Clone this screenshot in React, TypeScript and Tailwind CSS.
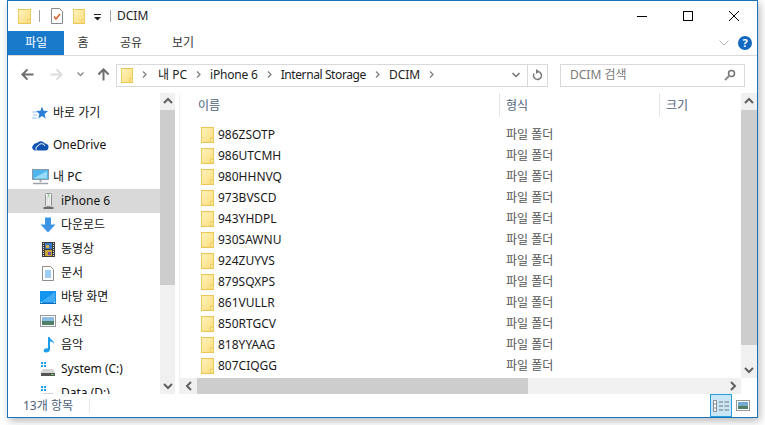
import React from "react";

const F = "font-['Noto_Sans','Noto_Sans_CJK_KR',sans-serif]";

function Folder({ s = 13, h = 15 }: { s?: number; h?: number }) {
  return (
    <svg width={s} height={h} viewBox="0 0 14 15" preserveAspectRatio="none" className="shrink-0">
      <defs>
        <linearGradient id="fg" x1="0" y1="0" x2="1" y2="1">
          <stop offset="0" stopColor="#fff3bf" />
          <stop offset="1" stopColor="#fbdc7a" />
        </linearGradient>
      </defs>
      <rect x="0.5" y="0.5" width="13" height="14" fill="url(#fg)" stroke="#eac752" />
      <path d="M10.5 14.5v-4h3" fill="#fff3c4" stroke="#eac752" />
    </svg>
  );
}

function Chev({ d, c = "#606060" }: { d: "u" | "d" | "l" | "r"; c?: string }) {
  const p = { u: "M1 6l4-4 4 4", d: "M1 3l4 4 4-4", l: "M7 1L3 5l4 4", r: "M3 1l4 4-4 4" }[d];
  return (
    <svg width="10" height="10" viewBox="0 0 10 10">
      <path d={p} fill="none" stroke={c} strokeWidth="2" />
    </svg>
  );
}

function Arrow({ dir, c }: { dir: "l" | "r" | "u"; c: string }) {
  const rot = dir === "l" ? 0 : dir === "r" ? 180 : 90;
  return (
    <svg width="13" height="13" viewBox="0 0 14 14" style={{ transform: `rotate(${rot}deg)` }}>
      <path d="M1.5 7h12M7 1.5L1.5 7 7 12.5" fill="none" stroke={c} strokeWidth="2.200" />
    </svg>
  );
}

const icons: Record<string, React.ReactNode> = {
  star: (
    <svg width="16" height="15" viewBox="0 0 16 15" className="shrink-0">
      <path d="M10 0.500l1.600 4.300 4.400.3-3.400 2.800 1.100 4.500L10 10.100l-3.700 2.300 1.100-4.500L4 5.100l4.400-.3z" fill="#2b7fd6" />
      <path d="M0.500 6h4M1 9h4M0 12h5" stroke="#8fc1ee" strokeWidth="1" />
    </svg>
  ),
  cloud: (
    <svg width="17" height="12" viewBox="0 0 17 12" className="shrink-0">
      <path d="M3 11.500A3 3 0 0 1 1 6.500 4 4 0 0 1 5 4 5 5 0 0 1 13 4.500 3.500 3.500 0 0 1 16.500 8.500 3 3 0 0 1 14 11.500z" fill="#0f52b0" />
      <path d="M5 11.500A2.500 2.500 0 0 1 6 7 3.800 3.800 0 0 1 13 7" fill="none" stroke="#fff" strokeWidth="1" />
    </svg>
  ),
  pc: (
    <svg width="17" height="16" viewBox="0 0 17 16" className="shrink-0">
      <rect x="0.500" y="0.500" width="16" height="10" fill="#4fb5ee" stroke="#8a9aa5" />
      <path d="M2 9L15 2V9.500H2z" fill="#9adcf8" />
      <path d="M8.500 11v2" stroke="#a0a8ae" strokeWidth="2" />
      <path d="M1 14.500h15" stroke="#9ba3a8" strokeWidth="1.500" />
    </svg>
  ),
  phone: (
    <svg width="11" height="16" viewBox="0 0 11 16" className="shrink-0">
      <rect x="2.500" y="0.500" width="6" height="13" rx="1" fill="#fff" stroke="#8e8e8e" />
      <rect x="4" y="4" width="3" height="9" fill="#eee" stroke="#bbb" strokeWidth="0.500" />
      <rect x="4.500" y="1.500" width="2" height="2" fill="#7fc97a" />
      <path d="M0.500 15h10" stroke="#444" strokeWidth="1.500" />
    </svg>
  ),
  down: (
    <svg width="16" height="16" viewBox="0 0 16 16" className="shrink-0">
      <path d="M5 0.500h6v7h4.500L8 15.500.5 7.500H5z" fill="#3d94e2" />
    </svg>
  ),
  film: (
    <svg width="13" height="15" viewBox="0 0 13 15" className="shrink-0">
      <rect x="0" y="0" width="13" height="15" fill="#3c3c3c" />
      <rect x="3" y="1" width="7" height="6" fill="#3a78c9" />
      <rect x="3" y="8" width="7" height="6" fill="#c9a63a" />
      <rect x="4" y="3" width="3" height="3" fill="#d9b23f" />
      <rect x="6" y="10" width="3" height="3" fill="#7a4aa6" />
      <path d="M1.500 1v13M11.500 1v13" stroke="#ddd" strokeWidth="1" strokeDasharray="1 1" />
    </svg>
  ),
  doc: (
    <svg width="12" height="15" viewBox="0 0 12 15" className="shrink-0">
      <path d="M.5.500h8l3 3v11H.500z" fill="#fff" stroke="#8e8e8e" />
      <path d="M3 5h6M3 7h6M3 9h6M3 11h6" stroke="#3f9be6" strokeWidth="1" />
    </svg>
  ),
  desk: (
    <svg width="16" height="13" viewBox="0 0 16 13" className="shrink-0">
      <rect width="16" height="13" fill="#1394ee" />
      <path d="M1 11L15 1v10z" fill="#41abf4" />
      <path d="M0 12.500h16" stroke="#0f6ab8" />
      <path d="M1 11.500h1M14 11.500h1" stroke="#fff" />
    </svg>
  ),
  pic: (
    <svg width="16" height="12" viewBox="0 0 16 12" className="shrink-0">
      <rect x="0.500" y="0.500" width="15" height="11" fill="#fff" stroke="#999" />
      <rect x="2" y="2" width="12" height="4" fill="#8dbde6" />
      <rect x="2" y="6" width="12" height="4" fill="#4f7f66" />
    </svg>
  ),
  music: (
    <svg width="13" height="16" viewBox="0 0 13 16" className="shrink-0">
      <path d="M6 0h1.500c.5 2.500 4.500 3 4.500 7-1-2-3-2.500-4-2.500V12.500c0 2-2.500 3.200-4.500 3-2.500-.5-2.500-3 0-4 1-.4 1.800-.4 2.500 0z" fill="#1b9cee" />
    </svg>
  ),
  drive: (
    <svg width="14" height="14" viewBox="0 0 14 14" className="shrink-0">
      <path d="M0 0h2v2H0zM3 0h2v2H3zM0 3h2v2H0zM3 3h2v2H3z" fill="#18a0ee" />
      <path d="M2 7h10l2 3v3H0v-3z" fill="#d4d4d4" />
      <rect x="0" y="11" width="14" height="3" fill="#555" />
      <rect x="10" y="12" width="3" height="1" fill="#5fd35f" />
    </svg>
  ),
};

const nav = [
  { t: "바로 가기", i: "star", indent: 0, h: "h-[32px]" },
  { t: "OneDrive", i: "cloud", indent: 0, h: "h-[32px]" },
  { t: "내 PC", i: "pc", indent: 0, h: "h-[24px] mt-[4px]" },
  { t: "iPhone 6", i: "phone", indent: 1, h: "h-[24px] bg-[#d9d9d9]" },
  { t: "다운로드", i: "down", indent: 1, h: "h-[24px]" },
  { t: "동영상", i: "film", indent: 1, h: "h-[24px]" },
  { t: "문서", i: "doc", indent: 1, h: "h-[24px]" },
  { t: "바탕 화면", i: "desk", indent: 1, h: "h-[24px]" },
  { t: "사진", i: "pic", indent: 1, h: "h-[24px]" },
  { t: "음악", i: "music", indent: 1, h: "h-[24px]" },
  { t: "System (C:)", i: "drive", indent: 1, h: "h-[24px]" },
  { t: "Data (D:)", i: "drive", indent: 1, h: "h-[24px]" },
];

const rows = [
  "986ZSOTP", "986UTCMH", "980HHNVQ", "973BVSCD", "943YHDPL", "930SAWNU",
  "924ZUYVS", "879SQXPS", "861VULLR", "850RTGCV", "818YYAAG", "807CIQGG",
];

export default function App() {
  return (
    <div className={`${F} w-[765px] h-[425px] bg-white overflow-hidden pl-[7px] text-[12px] text-[#1a1a1a]`}>
      <div className="w-[751px] h-[418px] border border-[#1a72b8] bg-white flex flex-col shadow-[2px_3px_8px_rgba(0,0,0,0.28)]">
        {/* Title bar */}
        <div className="h-[30px] flex items-center shrink-0">
          <div className="ml-[10px] flex"><Folder /></div>
          <div className="w-px h-3 bg-[#a0a0a0] ml-[8px]" />
          <svg width="12" height="16" viewBox="0 0 12 16" className="ml-[11px]">
            <path d="M.5.500h8l3 3v12H.500z" fill="#fff" stroke="#8a8a8a" />
            <path d="M3 8.500l2 2.500 4-5" fill="none" stroke="#e0602a" strokeWidth="1.500" />
          </svg>
          <div className="ml-[10px] flex"><Folder s={12} /></div>
          <svg width="7" height="7" viewBox="0 0 7 7" className="ml-[9px] mt-[2px]">
            <path d="M0 .5h7" stroke="#222" />
            <path d="M0 3h7L3.500 6.500z" fill="#222" />
          </svg>
          <div className="w-px h-3 bg-[#a0a0a0] ml-[9px]" />
          <span className="ml-[6px] text-[12px] text-[#222]">DCIM</span>
          <div className="ml-auto flex items-center">
            <div className="w-[46px] flex justify-center"><div className="w-[10px] h-px bg-black" /></div>
            <div className="w-[46px] flex justify-center"><div className="w-[10px] h-[10px] border border-black" /></div>
            <div className="w-[46px] flex justify-center">
              <svg width="10" height="10" viewBox="0 0 10 10"><path d="M0 0l10 10M10 0L0 10" stroke="#000" /></svg>
            </div>
          </div>
        </div>
        {/* Ribbon tabs */}
        <div className="h-[24px] flex items-center shrink-0 border-b border-[#dadada] box-content">
          <div className="w-[56px] h-[24px] bg-[#1979ca] text-white flex items-center justify-center">파일</div>
          <div className="w-[38px] flex justify-center text-[#333]">홈</div>
          <div className="w-[58px] flex justify-center text-[#333]">공유</div>
          <div className="w-[46px] flex justify-center text-[#333]">보기</div>
          <div className="ml-auto flex items-center pr-[5px]">
            <svg width="10" height="6" viewBox="0 0 10 6" className="mr-[9px]"><path d="M.5.500L5 5 9.500.500" fill="none" stroke="#b5b5b5" /></svg>
            <div className="w-[14px] h-[14px] rounded-full bg-[#1268bf] text-white text-[11px] font-bold flex items-center justify-center">?</div>
          </div>
        </div>
        {/* Nav bar */}
        <div className="h-[37px] flex items-center shrink-0 pt-[1px]">
          <div className="ml-[13px] flex mb-[2px]"><Arrow dir="l" c="#6f6f6f" /></div>
          <div className="ml-[16px] flex mb-[2px]"><Arrow dir="r" c="#dcdcdc" /></div>
          <svg width="7" height="5" viewBox="0 0 7 5" className="ml-[14px] mb-[1px]"><path d="M.5.500l3 3 3-3" fill="none" stroke="#8a8a8a" strokeWidth="1.300" /></svg>
          <div className="ml-[13px] flex mb-[2px]"><Arrow dir="u" c="#6f6f6f" /></div>
          <div className="ml-[6px] w-[432px] h-[23px] border border-[#d9d9d9] flex items-center text-[#222]">
            <div className="ml-[4px] flex"><Folder s={12} /></div>
            <Crumb />
            <span className="ml-[2px] mb-[1px]">내 PC</span>
            <Crumb />
            <span className="tracking-[-0.2px] mb-[1px]">iPhone 6</span>
            <Crumb />
            <span className="tracking-[-0.4px] mb-[1px]">Internal Storage</span>
            <Crumb />
            <span className="mb-[1px]">DCIM</span>
            <Crumb />
            <div className="ml-auto flex items-center h-full">
              <div className="px-[7px] h-full flex items-center">
                <svg width="8" height="6" viewBox="0 0 8 6"><path d="M.5 1L4 4.500 7.500 1" fill="none" stroke="#707070" strokeWidth="1.500" /></svg>
              </div>
              <div className="w-[20px] h-full border-l border-[#d9d9d9] flex items-center justify-center">
                <svg width="11" height="12" viewBox="0 0 11 12"><path d="M6 2.500A4 4 0 1 1 2 4.500" fill="none" stroke="#7a7a7a" strokeWidth="1.500" /><path d="M4 0l3.500 2.500L4 5z" fill="#7a7a7a" /></svg>
              </div>
            </div>
          </div>
          <div className="ml-[12px] w-[185px] h-[23px] border border-[#d9d9d9] flex items-center pl-[9px] pr-[8px] text-[#7a7a7a]">
            <span className="mb-[1px]">DCIM 검색</span>
            <svg width="12" height="12" viewBox="0 0 12 12" className="ml-auto"><circle cx="7.500" cy="4.500" r="3" fill="none" stroke="#707070" strokeWidth="1.500" /><path d="M5 7l-4 4" stroke="#8a8a8a" strokeWidth="2" /></svg>
          </div>
        </div>
        {/* Body */}
        <div className="flex-1 flex min-h-0">
          {/* Sidebar */}
          <div className="w-[152px] shrink-0 overflow-hidden pt-[4px]">
            {nav.map((n) => (
              <div key={n.t} className={`flex items-center ${n.indent ? "pl-[32px]" : "pl-[24px]"} ${n.h}`}>
                <div className="w-[16px] flex justify-center shrink-0">{icons[n.i]}</div>
                <span className="ml-[5px] whitespace-nowrap text-[#111]">{n.t}</span>
              </div>
            ))}
          </div>
          <VScroll top={17} thumb={175} />
          <div className="w-[5px] shrink-0 border-r border-[#f0f0f0]" />
          {/* Files */}
          <div className="flex-1 min-w-0 flex flex-col">
            <div className="flex-1 min-h-0 flex">
              <div className="flex-1 min-w-0">
                <div className="h-[24px] flex items-center text-[#4c607a] pl-[18px]">
                  <span className="w-[301px] pt-[1px]">이름</span>
                  <div className="w-px h-[24px] bg-[#e5e5e5]" />
                  <span className="w-[159px] pl-[6px] pt-[1px]">형식</span>
                  <div className="w-px h-[24px] bg-[#e5e5e5]" />
                  <span className="pl-[6px] pt-[1px]">크기</span>
                </div>
                <div className="pt-[7px]">
                  {rows.map((r) => (
                    <div key={r} className="h-[21px] flex items-center pl-[21px]">
                      <Folder s={13} h={16} />
                      <span className="ml-[4px] w-[288px]">{r}</span>
                      <span className="text-[#555]">파일 폴더</span>
                    </div>
                  ))}
                </div>
              </div>
              <VScroll top={17} thumb={235} w={16} />
            </div>
            <div className="h-[16px] shrink-0 flex bg-[#f0f0f0] mr-[16px]">
              <div className="w-[17px] flex items-center justify-center"><Chev d="l" /></div>
              <div className="w-[331px] bg-[#cdcdcd]" />
              <div className="ml-auto w-[17px] flex items-center justify-center"><Chev d="r" /></div>
            </div>
          </div>
        </div>
        {/* Status */}
        <div className="h-[23px] shrink-0 flex items-center pl-[15px] text-[#4c607a]">
          <span>13개 항목</span>
          <div className="w-px h-[14px] bg-[#e8e8e8] ml-[16px]" />
          <div className="ml-auto flex items-center pr-[7px]">
            <div className="w-[22px] h-[23px] bg-[#c9e6f7] border border-[#26a0da] flex items-center justify-center">
              <svg width="16" height="12" viewBox="0 0 16 12">
                <path d="M0.500.500h3v11h-3zM.5 4h3M.5 8h3" fill="#fff" stroke="#8a8a8a" />
                <path d="M6 2h4M11.500 2H16M6 6h4M11.500 6H16M6 10h4M11.500 10H16" stroke="#777" />
              </svg>
            </div>
            <div className="ml-[4px] flex">
              <svg width="14" height="11" viewBox="0 0 14 11">
                <rect x="0.500" y="0.500" width="13" height="10" fill="#fff" stroke="#999" />
                <rect x="2" y="2" width="10" height="3.500" fill="#6fa8dc" />
                <rect x="2" y="5.500" width="10" height="3.500" fill="#4f7f66" />
              </svg>
            </div>
          </div>
        </div>
      </div>
    </div>
  );
}

function Crumb() {
  return (
    <svg width="5" height="7" viewBox="0 0 5 7" className="mx-[9px] shrink-0 mb-[1px]">
      <path d="M1 .5l3 3-3 3" fill="none" stroke="#808080" strokeWidth="1.300" />
    </svg>
  );
}

function VScroll({ top, thumb, w = 15 }: { top: number; thumb: number; w?: number }) {
  return (
    <div style={{ width: w }} className="shrink-0 bg-[#f0f0f0] flex flex-col">
      <div style={{ height: top }} className="flex items-center justify-center shrink-0"><Chev d="u" /></div>
      <div style={{ height: thumb }} className="bg-[#cdcdcd] shrink-0" />
      <div className="flex-1" />
      <div className="h-[17px] flex items-center justify-center shrink-0"><Chev d="d" /></div>
    </div>
  );
}
